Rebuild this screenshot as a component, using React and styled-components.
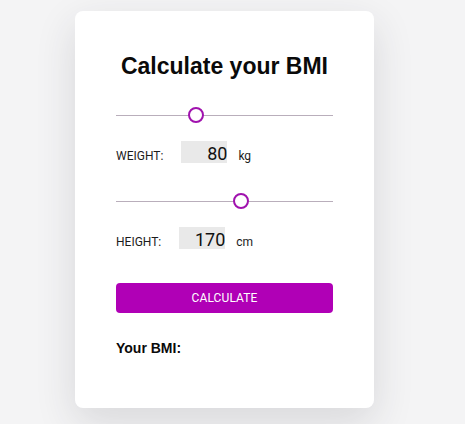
import React, { useState } from "react";
import styled, { createGlobalStyle } from "styled-components";

const Global = createGlobalStyle`
  html, body { margin: 0; padding: 0; }
  body {
    background: #f4f4f5;
    font-family: Roboto, "Liberation Sans", sans-serif;
    height: 424px;
    overflow: hidden;
  }
`;

const Page = styled.div`
  padding: 11px 0 0 75px;
`;

const Card = styled.div`
  width: 299px;
  box-sizing: border-box;
  background: #fff;
  border-radius: 8px;
  padding: 42px 41px 52px;
  box-shadow: 0 14px 40px rgba(40, 40, 60, 0.14);
  display: flex;
  flex-direction: column;
`;

const Title = styled.h1`
  margin: 0;
  font-family: "Liberation Sans", Arial, sans-serif;
  font-weight: 700;
  font-size: 23px;
  line-height: 27px;
  text-align: center;
  color: #0a0a0a;
`;

const Range = styled.input.attrs({ type: "range" })`
  -webkit-appearance: none;
  appearance: none;
  width: 217px;
  height: 16px;
  margin: ${(p) => p.$top}px 0 0;
  padding: 0;
  background: transparent;
  &::-webkit-slider-runnable-track {
    height: 1px;
    background: #b9aebb;
  }
  &::-webkit-slider-thumb {
    -webkit-appearance: none;
    width: 16px;
    height: 16px;
    border-radius: 50%;
    box-sizing: border-box;
    border: 2px solid #a012ae;
    background: #fff;
    margin-top: -7.5px;
  }
`;

const Row = styled.div`
  display: flex;
  align-items: baseline;
  margin-top: ${(p) => p.$top}px;
  height: 22px;
`;

const Label = styled.span`
  font-size: 12px;
  color: #1c1c1c;
  margin-right: 18px;
`;

const Value = styled.input`
  width: 46px;
  height: 22px;
  box-sizing: border-box;
  border: none;
  outline: none;
  background: #e9e9e9;
  font-family: Roboto, sans-serif;
  font-size: 18px;
  color: #111;
  text-align: right;
  padding: 2px 0 0;
  margin: 0;
`;

const Unit = styled.span`
  font-size: 12px;
  color: #1c1c1c;
  margin-left: 11px;
`;

const Button = styled.button`
  margin-top: 34px;
  height: 30px;
  width: 100%;
  border: none;
  border-radius: 4px;
  background: #b000b6;
  color: #fff;
  font-family: Roboto, sans-serif;
  font-size: 12px;
  letter-spacing: 0.1px;
  cursor: pointer;
`;

const Result = styled.div`
  margin-top: 27px;
  font-family: "Liberation Sans", Arial, sans-serif;
  font-weight: 700;
  font-size: 14px;
  line-height: 16px;
  color: #0a0a0a;
`;

export default function App() {
  const [weight, setWeight] = useState(80);
  const [height, setHeight] = useState(170);
  const [bmi, setBmi] = useState("");
  return (
    <Page>
      <Global />
      <Card>
        <Title>Calculate your BMI</Title>
        <Range
          $top={27}
          min={40}
          max={152}
          value={weight}
          onChange={(e) => setWeight(+e.target.value)}
        />
        <Row $top={18}>
          <Label>WEIGHT:</Label>
          <Value value={weight} onChange={(e) => setWeight(+e.target.value || 0)} />
          <Unit>kg</Unit>
        </Row>
        <Range
          $top={30}
          min={100}
          max={220}
          value={height}
          onChange={(e) => setHeight(+e.target.value)}
        />
        <Row $top={18}>
          <Label>HEIGHT:</Label>
          <Value value={height} onChange={(e) => setHeight(+e.target.value || 0)} />
          <Unit>cm</Unit>
        </Row>
        <Button
          onClick={() =>
            setBmi((weight / Math.pow(height / 100, 2)).toFixed(1))
          }
        >
          CALCULATE
        </Button>
        <Result>Your BMI: {bmi}</Result>
      </Card>
    </Page>
  );
}
